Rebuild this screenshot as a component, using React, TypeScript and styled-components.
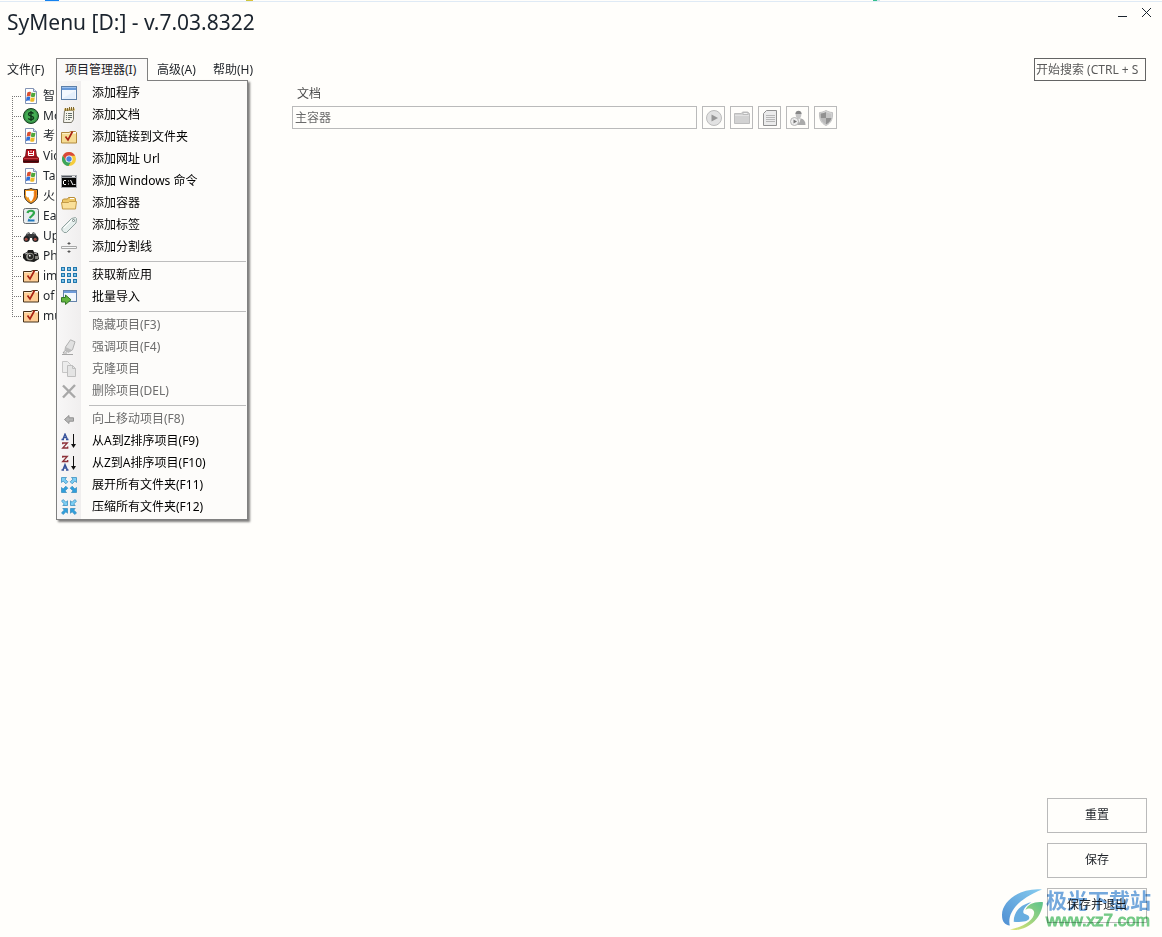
import React from "react";
import styled, { createGlobalStyle } from "styled-components";

const GlobalStyle = createGlobalStyle`
  *, *::before, *::after { box-sizing: border-box; }
  body { margin: 0; background: #fffefb; }
  body, button, input {
    font-family: "Noto Sans", "Noto Sans CJK SC", sans-serif;
    font-size: 12px;
    line-height: 18px;
    color: #1f2328;
  }
`;

const Window = styled.div`
  position: relative;
  display: flex;
  flex-direction: column;
  min-height: 100vh;
  overflow: hidden;
`;

const Edge = styled.div`
  height: 2px;
  border-bottom: 1px solid #dfeaf5;
  background: linear-gradient(
    90deg,
    transparent 45px, #1583f0 45px, #1583f0 59px,
    transparent 59px, transparent 246px, #c5c83c 246px, #e5c23a 253px,
    transparent 253px, transparent 873px, #35c08a 873px, #35c08a 877px,
    #cfe3ea 877px, #cfe3ea 880px, transparent 880px
  );
`;

const TitleBar = styled.header`
  display: flex;
  justify-content: space-between;
  align-items: flex-start;
  height: 56px;
  padding: 5px 10px 0 7px;
`;

const Title = styled.h1`
  margin: 0;
  font-size: 21px;
  line-height: 30px;
  font-weight: 400;
  color: #1b242e;
`;

const Controls = styled.div`
  display: flex;
  gap: 13px;
`;

const ControlButton = styled.button`
  width: 11px;
  height: 12px;
  padding: 0;
  border: 0;
  background: none;
  svg { display: block; }
`;

const NavBar = styled.div`
  display: flex;
  justify-content: space-between;
  align-items: flex-start;
  height: 24px;
  padding-right: 16px;
`;

const MenuBar = styled.nav`
  display: flex;
`;

const MenuSlot = styled.div`
  position: relative;
`;

const MenuButton = styled.button<{ $open?: boolean }>`
  position: relative;
  z-index: ${(p) => (p.$open ? 3 : 0)};
  display: block;
  width: ${(p) => (p.$open ? "92px" : "56px")};
  height: 23px;
  padding: 0 0 0 8px;
  text-align: left;
  white-space: nowrap;
  border: 1px solid ${(p) => (p.$open ? "#808080" : "transparent")};
  border-bottom: 0;
  background: ${(p) => (p.$open ? "#fbfaf9" : "transparent")};
  ${MenuBar} > &:first-child { padding-left: 6px; }
`;

const SearchBox = styled.input`
  width: 112px;
  height: 23px;
  padding: 0 1px;
  border: 1px solid #646464;
  border-radius: 0;
  background: #fffefb;
  outline: 0;
  &::placeholder { color: #5a5a5a; opacity: 1; }
`;

const Dropdown = styled.ul`
  position: absolute;
  z-index: 2;
  top: 22px;
  left: 0;
  width: 192px;
  margin: 0;
  padding: 1px 1px 1px 0;
  list-style: none;
  border: 1px solid #808080;
  background: linear-gradient(90deg, #f8f7f7 0, #f0eeee 24px, #fdfcfa 24px);
  box-shadow: 2px 2px 2px rgba(0, 0, 0, 0.5);
`;

const Separator = styled.li`
  height: 6px;
  margin-left: 32px;
  padding-top: 3px;
  &::before {
    content: "";
    display: block;
    height: 1px;
    background: #bdbdbd;
  }
`;

const Command = styled.button`
  display: flex;
  align-items: center;
  gap: 15px;
  width: 100%;
  height: 22px;
  padding: 0 4px;
  border: 0;
  background: none;
  color: #000;
  white-space: nowrap;
  text-align: left;
  &:disabled { color: #6d6d6d; }
`;

const IconBox = styled.span`
  display: flex;
  flex: none;
  width: 16px;
  height: 16px;
`;

const Body = styled.div`
  display: grid;
  grid-template-columns: 292px minmax(0, 1fr);
  flex: 1;
  padding: 0 15px 0 0;
`;

const Tree = styled.ul`
  margin: 0;
  padding: 4px 0 0 12px;
  list-style: none;
`;

const TreeRow = styled.li`
  display: flex;
  align-items: center;
  height: 20px;
  background:
    repeating-linear-gradient(90deg, #777 0 1px, transparent 1px 2px) 0 10px / 10px 1px no-repeat,
    repeating-linear-gradient(180deg, #777 0 1px, transparent 1px 2px) 0 0 / 1px 100% no-repeat;
  &:first-child {
    background-position: 0 10px, 0 10px;
  }
  &:last-child {
    background-size: 10px 1px, 1px 10px;
  }
`;

const TreeLink = styled.button`
  display: flex;
  align-items: center;
  gap: 4px;
  margin-left: 11px;
  padding: 0;
  border: 0;
  background: none;
`;

const Content = styled.main`
  display: flex;
  flex-direction: column;
  justify-content: space-between;
  padding-bottom: 14px;
`;

const Form = styled.form`
  max-width: 545px;
  padding-top: 3px;
`;

const Label = styled.label`
  display: block;
  padding-left: 5px;
  line-height: 18px;
  color: #4c4c4c;
`;

const FieldRow = styled.div`
  display: flex;
  gap: 5px;
  margin-top: 3px;
`;

const TextField = styled.input`
  flex: 1;
  min-width: 0;
  height: 23px;
  padding: 0 2px 2px;
  border: 1px solid #bababa;
  border-radius: 0;
  background: #fffefb;
  color: #6a6a6a;
`;

const ToolButton = styled.button`
  display: flex;
  align-items: center;
  justify-content: center;
  width: 23px;
  height: 23px;
  padding: 0;
  border: 1px solid #bababa;
  background: #fffefb;
`;

const Actions = styled.div`
  display: flex;
  flex-direction: column;
  align-items: flex-end;
  gap: 10px;
`;

const ActionButton = styled.button`
  width: 100px;
  height: 35px;
  padding: 0 0 2px;
  border: 1px solid #bababa;
  background: #fffefb;
`;

const Watermark = styled.div`
  position: absolute;
  right: 11px;
  bottom: 6px;
  display: flex;
  align-items: center;
  gap: 3px;
  mix-blend-mode: multiply;
  pointer-events: none;
`;

const WatermarkText = styled.div`
  display: flex;
  flex-direction: column;
  font-weight: 700;
  white-space: nowrap;
`;

const WatermarkName = styled.span`
  font-size: 21px;
  line-height: 22px;
  color: #74a9e0;
`;

const WatermarkSite = styled.span`
  font-family: "Liberation Sans", Arial, sans-serif;
  font-weight: 400;
  -webkit-text-stroke: 1px #74cb88;
  font-size: 17px;
  line-height: 20px;
  color: #74cb88;
`;

const Svg = ({ children }: { children: React.ReactNode }) => (
  <svg width="16" height="16" viewBox="0 0 16 16" fill="none" aria-hidden="true">
    {children}
  </svg>
);

const AppIcon = () => (
  <Svg>
    <rect x=".5" y="1.5" width="15" height="13" fill="#f3f8fe" stroke="#5c7fa8" />
    <path d="M1 2h14v3H1z" fill="#6698d8" />
    <path d="M1 2h14v1H1z" fill="#9cc0ee" />
    <path d="M2 13l12-7v8H2z" fill="#e4effc" />
  </Svg>
);

const NotesIcon = () => (
  <Svg>
    <path d="M3.500 3.500h9v9l-2 3h-8z" fill="#f5f4ec" stroke="#777569" />
    <path d="M3 2.500h11" stroke="#d8bd71" strokeWidth="2" />
    <path d="M4.500 1v3M6.500 1v3M8.500 0v3M10.500 0v3M12.500 0v3" stroke="#80682c" />
    <path d="M5 6.500h1M7 6.500h4M5 8.500h1M7 8.500h4M5 10.500h1M7 10.500h4M5 12.500h1M7 12.500h2" stroke="#65706b" />
  </Svg>
);

const CheckFolderIcon = ({ warm }: { warm?: boolean }) => (
  <Svg>
    <path
      d="M.5 3.500h7.500l1.500-1h5l1 1v10.500H.5z"
      fill={warm ? "#ffcf96" : "#f6dc93"}
      stroke={warm ? "#45301a" : "#b18a3e"}
    />
    <path d="M1 4.500h14" stroke={warm ? "#ffe9c8" : "#fdf0c4"} />
    <path d="M10 3h5v1h-5z" fill="#fff" />
    <path d="M4.500 7.500L7 11l4.500-8.500" stroke="#a92415" strokeWidth="1.700" />
  </Svg>
);

const ChromeIcon = () => (
  <Svg>
    <circle cx="8" cy="8" r="7" fill="#f5cc3d" />
    <path d="M8 8L1.900 4.500A7 7 0 0 1 14.100 4.800L8 4.800z" fill="#d9483b" />
    <path d="M1.900 4.500A7 7 0 0 0 7.500 15L10.600 9.800 5.200 9.500z" fill="#3ba55c" />
    <path d="M1.900 4.500L5.200 9.800 8 4.800z" fill="#d9483b" />
    <circle cx="8" cy="8" r="3.500" fill="#fff" />
    <circle cx="8" cy="8" r="2.700" fill="#4a82de" />
  </Svg>
);

const ConsoleIcon = () => (
  <Svg>
    <path d="M0 2h16v13H0z" fill="#a9acb0" />
    <path d="M1 3h14v1H1z" fill="#535760" />
    <path d="M11 3h3v1h-3z" fill="#eee" />
    <path d="M1 5h14v9H1z" fill="#050505" />
    <path d="M5 7.500H3l-.5.5v3l.5.500h2M7.500 7.500v1M7.500 10.500v1M9.500 7l2.500 5" stroke="#fff" />
    <path d="M12.500 11.500h2" stroke="#ddd" />
  </Svg>
);

const OpenFolderIcon = () => (
  <Svg>
    <path d="M1.500 13.500V5l1-1h4l1-1.500h6l1 1v9z" fill="#edc767" stroke="#b88e3c" />
    <path d="M9 3.500h4" stroke="#fff" />
    <path d="M.5 7.500h7l1-1h7l-1 7.500h-13z" fill="#fae09a" stroke="#c49b48" />
  </Svg>
);

const TagIcon = () => (
  <Svg>
    <path d="M1 11l9.500-9.500 4-1 1 1-.5 4.500L5.500 15.500H3L.8 13z" fill="#e6efed" stroke="#90a29f" />
    <path d="M3 11l8-8" stroke="#fff" />
    <circle cx="12.500" cy="3.500" r="1" fill="#fff" stroke="#70807e" />
  </Svg>
);

const DividerIcon = () => (
  <Svg>
    <path d="M.5 7.500h15v2H.5z" fill="#f7f7f7" stroke="#a8a8a8" />
    <path d="M8 3l2 2H6zM8 14l2-2H6z" fill="#555" />
    <path d="M8 5v1M8 11v1" stroke="#777" />
  </Svg>
);

const GridIcon = () => (
  <Svg>
    {[0, 6, 12].map((y) =>
      [0, 6, 12].map((x) => (
        <rect key={`${x}-${y}`} x={x + 0.5} y={y + 0.5} width="3" height="3" fill="#7cc0e6" stroke="#2277ad" />
      ))
    )}
  </Svg>
);

const ImportIcon = () => (
  <Svg>
    <rect x="2.500" y="1.500" width="13" height="11" fill="#f2f7fd" stroke="#6483aa" />
    <path d="M3 2h12v2H3z" fill="#6f9cda" />
    <path d="M.5 8.500h4V6l5.500 4.800-5.500 4.700V13h-4z" fill="#63b53f" stroke="#35772a" />
  </Svg>
);

const HighlightIcon = () => (
  <Svg>
    <path d="M9.500.8l4.500 2-2.500 8-4 2.500L4 11.500 4.500 8z" fill="#e0e0e0" stroke="#b0b0b0" />
    <path d="M4.500 8l6.500 3-3.500 2.500L4 11.500z" fill="#bdbdbd" />
    <path d="M1 15.500h11M4 11.500L2 14h4" stroke="#a4a4a4" />
  </Svg>
);

const CopyIcon = () => (
  <Svg>
    <path d="M1.500.5h5l3 3v8h-8z" fill="#ececec" stroke="#c6c6c6" />
    <path d="M6.500 4.500h5l3 3v8h-8z" fill="#e4e4e4" stroke="#bebebe" />
    <path d="M11.500 4.500v3h3" stroke="#bebebe" />
  </Svg>
);

const DeleteIcon = () => (
  <Svg>
    <path d="M2 2.500l12 12M14 2L2 14.500" stroke="#a8a8a8" strokeWidth="2.400" />
  </Svg>
);

const ArrowIcon = () => (
  <Svg>
    <path d="M3.500 8.500L8 4.500v2.300h4.500v3.400H8v2.300z" fill="#b5b5b5" stroke="#929292" />
  </Svg>
);

const LETTER_A = "M.5 6.500h2.500M5 6.500h2.500M1.800 6.500L4 1l2.500 5.500M3 4.500h3";
const LETTER_Z = "M1.700 2.800V1.500h4.600L1.700 6.500h5V5";

const SortIcon = ({ reverse }: { reverse?: boolean }) => (
  <Svg>
    <path d={reverse ? LETTER_Z : LETTER_A} stroke={reverse ? "#8c3038" : "#35519a"} strokeWidth="1.300" />
    <path
      d={reverse ? LETTER_A : LETTER_Z}
      transform="translate(0 8.500)"
      stroke={reverse ? "#35519a" : "#8c3038"}
      strokeWidth="1.300"
    />
    <path d="M12.500 1v12" stroke="#111" />
    <path d="M10 11h5l-2.500 4z" fill="#111" />
  </Svg>
);

const CORNERS = [0, 90, 180, 270];

const ExpandIcon = () => (
  <Svg>
    {CORNERS.map((a) => (
      <path
        key={a}
        transform={`rotate(${a} 8 8)`}
        d="M.5.5h5L4 2.200l2.800 2.600-2 2L2.200 4 .5 5.500z"
        fill={a < 180 ? "#7ed0f5" : "#2e9fdd"}
        stroke="#3c8fc0"
        strokeWidth=".8"
      />
    ))}
  </Svg>
);

const CollapseIcon = () => (
  <Svg>
    {CORNERS.map((a) => (
      <path
        key={a}
        transform={`rotate(${a} 8 8)`}
        d="M6.500 6.500H1.800l1.500-1.600L.5 2.200l1.700-1.700 2.700 2.800 1.600-1.500z"
        fill={a < 180 ? "#7ed0f5" : "#2e9fdd"}
        stroke="#3c8fc0"
        strokeWidth=".8"
      />
    ))}
  </Svg>
);

const ProgramDocIcon = () => (
  <Svg>
    <path d="M2.500.5h8l3 3v12h-11z" fill="#fff" stroke="#8494b4" />
    <path d="M10.500.5v3h3" fill="#d7e4f5" stroke="#8494b4" />
    <path d="M4.300 4.500c1.500-.9 2.500-.8 3.700-.3l-.7 4.300c-1.200-.6-2.300-.6-3.700.2z" fill="#dc5030" />
    <path d="M8.500 4.500c1.500.7 2.500.6 4-.1l-.6 4.200c-1.400.8-2.600.7-4.100 0z" fill="#4fa83c" />
    <path d="M3.500 9.200c1.400-.8 2.500-.8 3.700-.2l-.6 4c-1.200-.6-2.200-.5-3.600.2z" fill="#2f6ed5" />
    <path d="M7.700 9.300c1.500.8 2.700.7 4.100-.1l-.6 4c-1.400.8-2.600.8-4.100.1z" fill="#eeb92c" />
  </Svg>
);

const MoneyIcon = () => (
  <Svg>
    <circle cx="8" cy="8" r="7.500" fill="#379447" stroke="#183d20" />
    <circle cx="8" cy="8" r="5.800" fill="#45ad54" />
    <path d="M10.500 5.500C9 4 5.500 4 5.500 6.200S10.600 8 10.600 10 7 12 5.200 10.500M8 3v10" stroke="#10361a" strokeWidth="1.400" />
  </Svg>
);

const VideoIcon = () => (
  <Svg>
    <path d="M3.500 1.500h9l1 8h-11z" fill="#c01622" stroke="#6a0e14" />
    <path d="M0 10l2-2h12l2 2v4l-1 1H1l-1-1z" fill="#8f101a" />
    <path d="M1 10.500h14" stroke="#c73a40" />
    <path d="M0 13.500h16" stroke="#3a080b" strokeWidth="2" />
    <path d="M5.500 3v4.500h5V3M5.500 5.500h5M8 2.500v1.500" stroke="#fff" />
  </Svg>
);

const ShieldFireIcon = () => (
  <Svg>
    <path d="M1.500 1.500c2.500 0 4.500 0 6.500-1 2 1 4 1 6.500 1v6c0 4-3 6.500-6.500 8-3.500-1.500-6.500-4-6.500-8z" fill="#f29a22" stroke="#332b26" />
    <path d="M3 3h8c-1 2 .5 3.500-.5 6-.6 2-1.500 3.500-2.500 4.500C6.500 12 6 10.500 5.500 9 4.500 10 3.500 9 3 7.500z" fill="#fff" />
    <path d="M11.500 2.500H13v5c0 2.500-1.500 4.500-4 6 2.500-3.500 3-6.500 2.500-11z" fill="#ea6c18" />
  </Svg>
);

const QuestionIcon = () => (
  <Svg>
    <rect x=".5" y=".5" width="15" height="15" rx="2" fill="#e9edef" stroke="#686e72" />
    <path d="M4.500 5c.5-3 7-3 6.500 0-.3 2-2.500 3.200-4.500 5" stroke="#2fa84b" strokeWidth="2.200" />
    <path d="M5.500 10.500l-1 3h7v-2H7z" fill="#2078bd" />
  </Svg>
);

const BinocularsIcon = () => (
  <Svg>
    <path d="M1 10l3-5 2-1 1 2h2l1-2 2 1 3 5v3h-5l-1-3H7l-1 3H1z" fill="#393b3c" />
    <circle cx="3.500" cy="11" r="3" fill="#202224" />
    <circle cx="12.500" cy="11" r="3" fill="#202224" />
    <circle cx="3.200" cy="11.200" r="1.500" fill="#a64e43" />
    <circle cx="12.200" cy="11.200" r="1.500" fill="#a64e43" />
    <path d="M4 6l2-1M10 5l2 1" stroke="#a5a7a8" />
  </Svg>
);

const CameraIcon = () => (
  <Svg>
    <path d="M0 6l4-2 1-2h5l1 2 4 1 1 6-5 3-8-1-3-3z" fill="#1d1d1c" />
    <path d="M2 6l3-1M11 5l3 1" stroke="#bbb" />
    <circle cx="7" cy="8.500" r="3.800" fill="#9a9993" />
    <circle cx="7.500" cy="8.500" r="2.700" fill="#282825" />
    <circle cx="6.800" cy="7.700" r=".9" fill="#fff" />
    <path d="M12 8h3v3h-3z" fill="#80807a" />
  </Svg>
);

const PlayGray = () => (
  <Svg>
    <circle cx="8" cy="8" r="7.500" fill="#e2e2e2" stroke="#bcbcbc" />
    <path d="M5.500 4.500L12 8l-6.500 3.500z" fill="#969696" />
  </Svg>
);

const FolderGray = () => (
  <Svg>
    <path d="M.5 3.500h7l1-1.500h5l2 1.500v10H.5z" fill="#d2d2d2" stroke="#bdbdbd" />
    <path d="M9 2.500h5v2H9z" fill="#f2f2f2" stroke="#bbb" />
    <path d="M1 5.500h14" stroke="#e2e2e2" />
  </Svg>
);

const PageGray = () => (
  <Svg>
    <path d="M4.500.5h10v15h-13v-12z" fill="#ebebeb" stroke="#919191" />
    <path d="M4 5.500h9M4 7.500h9M4 9.500h9M4 11.500h9" stroke="#b7b7b7" />
  </Svg>
);

const UserGray = () => (
  <Svg>
    <path d="M5 15c0-4 1-6 3-6.500h3c3 .5 4.500 3 4.500 6.500z" fill="#aaa" />
    <path d="M5.500 4C5 0 12 0 11.500 4L11 6.500c-1 3-4 3-5 0z" fill="#c5c5c5" />
    <path d="M5.500 4C5-.5 12-.5 11.500 4z" fill="#888" />
    <path d="M8 9h2.500l-1 4z" fill="#eee" />
    <circle cx="4.500" cy="11.500" r="4" fill="#eee" stroke="#b5b5b5" />
    <path d="M3.500 9.500L7 11.500l-3.500 2z" fill="#777" />
  </Svg>
);

const ShieldGray = () => (
  <Svg>
    <path d="M1.500 2.500C4 2.500 6 1.500 8 .5c2 1 4 2 6.500 2 .5 7-2 11-6.500 13-4.500-2-7-6-6.500-13z" fill="#d8d8d8" stroke="#c1c1c1" />
    <path d="M2.500 3.500C5 3.500 6.500 2.500 8 2v6H2.700zM8 8h5.500c-.7 3-2.500 5-5.500 6.500z" fill="#919191" />
    <path d="M8 2c2 1 4 1.500 5.500 1.500L13.300 8H8z" fill="#c5c5c5" />
    <path d="M2.700 8H8v6.500C5 13 3 11 2.700 8z" fill="#bababa" />
  </Svg>
);

type CommandDef = { label: string; icon?: React.ReactNode; disabled?: boolean };

const COMMAND_GROUPS: CommandDef[][] = [
  [
    { label: "添加程序", icon: <AppIcon /> },
    { label: "添加文档", icon: <NotesIcon /> },
    { label: "添加链接到文件夹", icon: <CheckFolderIcon /> },
    { label: "添加网址 Url", icon: <ChromeIcon /> },
    { label: "添加 Windows 命令", icon: <ConsoleIcon /> },
    { label: "添加容器", icon: <OpenFolderIcon /> },
    { label: "添加标签", icon: <TagIcon /> },
    { label: "添加分割线", icon: <DividerIcon /> },
  ],
  [
    { label: "获取新应用", icon: <GridIcon /> },
    { label: "批量导入", icon: <ImportIcon /> },
  ],
  [
    { label: "隐藏项目(F3)", disabled: true },
    { label: "强调项目(F4)", icon: <HighlightIcon />, disabled: true },
    { label: "克隆项目", icon: <CopyIcon />, disabled: true },
    { label: "删除项目(DEL)", icon: <DeleteIcon />, disabled: true },
  ],
  [
    { label: "向上移动项目(F8)", icon: <ArrowIcon />, disabled: true },
    { label: "从A到Z排序项目(F9)", icon: <SortIcon /> },
    { label: "从Z到A排序项目(F10)", icon: <SortIcon reverse /> },
    { label: "展开所有文件夹(F11)", icon: <ExpandIcon /> },
    { label: "压缩所有文件夹(F12)", icon: <CollapseIcon /> },
  ],
];

const TREE_ITEMS = [
  { label: "智", icon: <ProgramDocIcon /> },
  { label: "Mo", icon: <MoneyIcon /> },
  { label: "考", icon: <ProgramDocIcon /> },
  { label: "Vic", icon: <VideoIcon /> },
  { label: "Ta", icon: <ProgramDocIcon /> },
  { label: "火", icon: <ShieldFireIcon /> },
  { label: "Ea", icon: <QuestionIcon /> },
  { label: "Up", icon: <BinocularsIcon /> },
  { label: "Ph", icon: <CameraIcon /> },
  { label: "im", icon: <CheckFolderIcon warm /> },
  { label: "of", icon: <CheckFolderIcon warm /> },
  { label: "mu", icon: <CheckFolderIcon warm /> },
];

const TOOLS = [
  { name: "运行", icon: <PlayGray /> },
  { name: "文件夹", icon: <FolderGray /> },
  { name: "文档", icon: <PageGray /> },
  { name: "以用户身份运行", icon: <UserGray /> },
  { name: "管理员", icon: <ShieldGray /> },
];

export default function App() {
  return (
    <Window>
      <GlobalStyle />
      <Edge />
      <TitleBar>
        <Title>SyMenu [D:] - v.7.03.8322</Title>
        <Controls>
          <ControlButton type="button" aria-label="最小化">
            <svg width="11" height="12" viewBox="0 0 11 12"><path d="M1 9.500h9" stroke="#1b242e" /></svg>
          </ControlButton>
          <ControlButton type="button" aria-label="关闭">
            <svg width="11" height="12" viewBox="0 0 11 12"><path d="M1 1l9 9M10 1l-9 9" stroke="#1b242e" /></svg>
          </ControlButton>
        </Controls>
      </TitleBar>
      <NavBar>
        <MenuBar>
          <MenuButton type="button">文件(F)</MenuButton>
          <MenuSlot>
            <MenuButton type="button" $open aria-haspopup="menu" aria-expanded="true">项目管理器(I)</MenuButton>
            <Dropdown>
              {COMMAND_GROUPS.map((group, i) => (
                <React.Fragment key={i}>
                  {i > 0 && <Separator role="separator" />}
                  {group.map((c) => (
                    <li key={c.label}>
                      <Command type="button" disabled={c.disabled}>
                        <IconBox>{c.icon}</IconBox>
                        {c.label}
                      </Command>
                    </li>
                  ))}
                </React.Fragment>
              ))}
            </Dropdown>
          </MenuSlot>
          <MenuButton type="button">高级(A)</MenuButton>
          <MenuButton type="button">帮助(H)</MenuButton>
        </MenuBar>
        <SearchBox type="text" aria-label="开始搜索" placeholder="开始搜索 (CTRL + S" />
      </NavBar>
      <Body>
        <Tree>
          {TREE_ITEMS.map((t) => (
            <TreeRow key={t.label}>
              <TreeLink type="button">
                <IconBox>{t.icon}</IconBox>
                {t.label}
              </TreeLink>
            </TreeRow>
          ))}
        </Tree>
        <Content>
          <Form>
            <Label htmlFor="doc-name">文档</Label>
            <FieldRow>
              <TextField id="doc-name" type="text" defaultValue="主容器" />
              {TOOLS.map((t) => (
                <ToolButton key={t.name} type="button" aria-label={t.name}>
                  {t.icon}
                </ToolButton>
              ))}
            </FieldRow>
          </Form>
          <Actions>
            <ActionButton type="button">重置</ActionButton>
            <ActionButton type="button">保存</ActionButton>
            <ActionButton type="button">保存并退出</ActionButton>
          </Actions>
        </Content>
      </Body>
      <Watermark>
        <svg width="41" height="42" viewBox="0 0 42 42" aria-hidden="true">
          <defs>
            <linearGradient id="swirl-blue" x1="0" y1="1" x2="1" y2="0">
              <stop offset="0" stopColor="#4f8fd6" />
              <stop offset="1" stopColor="#86cdf3" />
            </linearGradient>
            <linearGradient id="swirl-green" x1="0" y1="1" x2="1" y2="0">
              <stop offset="0" stopColor="#dfe576" />
              <stop offset="1" stopColor="#5cc48d" />
            </linearGradient>
          </defs>
          <path d="M41 0C18-2 0 12 0 26c0 7 3 10 8 11C5 24 16 10 41 0z" fill="url(#swirl-blue)" />
          <path d="M12 33c0-11 8-18 18-20-6 4-9 8-8 11 1 2 6 1 6 5 0 3-5 5-16 4z" fill="#68aee4" />
          <path d="M42 13c-1 17-17 31-34 28 14-3 24-9 25-17 0-4-5-6-9-3 2-6 10-9 18-8z" fill="url(#swirl-green)" />
        </svg>
        <WatermarkText>
          <WatermarkName>极光下载站</WatermarkName>
          <WatermarkSite>www.xz7.com</WatermarkSite>
        </WatermarkText>
      </Watermark>
    </Window>
  );
}
